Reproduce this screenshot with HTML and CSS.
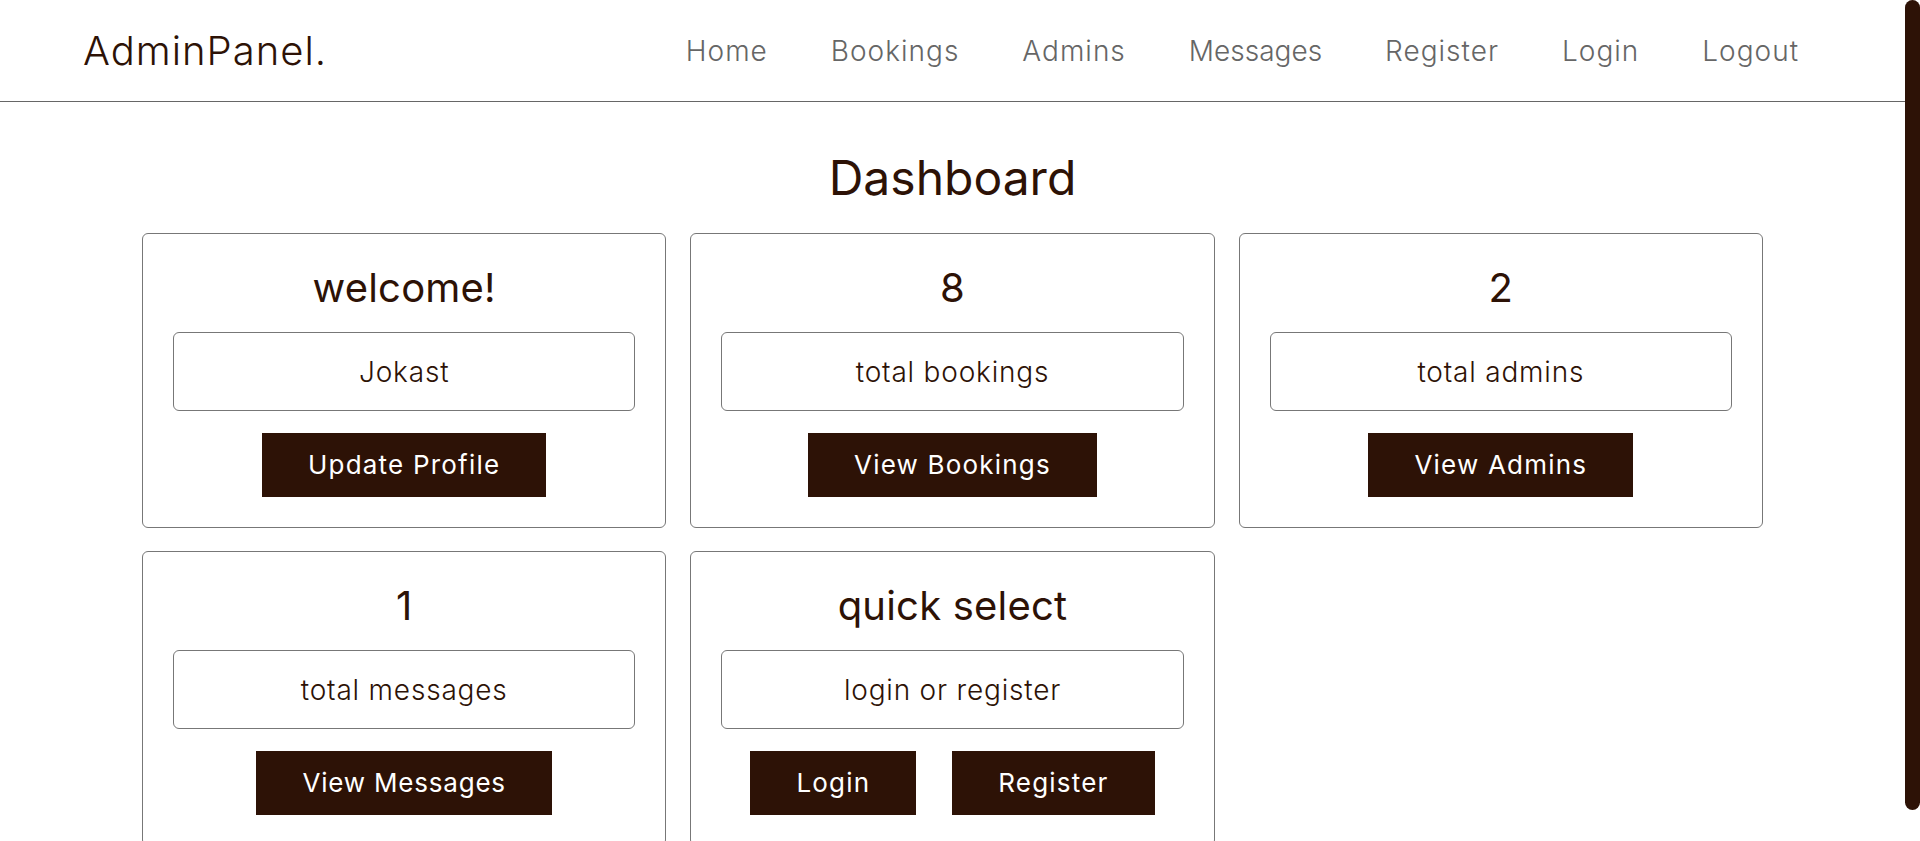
FILE: index.html
```html
<!DOCTYPE html>
<html lang="en">
<head>
<meta charset="utf-8">
<title>Admin Panel - Dashboard</title>
<link rel="stylesheet" href="styles.css">
</head>
<body>
<header class="header">
  <a href="#" class="logo">AdminPanel.</a>
  <nav class="navbar">
    <a href="#">Home</a>
    <a href="#">Bookings</a>
    <a href="#">Admins</a>
    <a href="#" class="tight">Messages</a>
    <a href="#">Register</a>
    <a href="#">Login</a>
    <a href="#">Logout</a>
  </nav>
</header>

<section class="dashboard">
  <h1 class="heading">Dashboard</h1>
  <div class="box-container">
    <div class="box">
      <h3>welcome!</h3>
      <p>Jokast</p>
      <div class="actions"><a href="#" class="btn">Update Profile</a></div>
    </div>
    <div class="box">
      <h3>8</h3>
      <p>total bookings</p>
      <div class="actions"><a href="#" class="btn">View Bookings</a></div>
    </div>
    <div class="box">
      <h3>2</h3>
      <p>total admins</p>
      <div class="actions"><a href="#" class="btn">View Admins</a></div>
    </div>
    <div class="box">
      <h3>1</h3>
      <p>total messages</p>
      <div class="actions"><a href="#" class="btn btn-tight">View Messages</a></div>
    </div>
    <div class="box">
      <h3>quick select</h3>
      <p>login or register</p>
      <div class="actions"><a href="#" class="btn">Login</a><a href="#" class="btn">Register</a></div>
    </div>
  </div>
</section>

<div class="scroll-thumb" aria-hidden="true"></div>
</body>
</html>
```

FILE: styles.css
```css
* {
  margin: 0;
  padding: 0;
  box-sizing: border-box;
  text-decoration: none;
}

html {
  font-family: "Inter", "Lato", sans-serif;
  color: #2d1206;
  background: #fff;
}

html::-webkit-scrollbar {
  width: 15px;
}

html::-webkit-scrollbar-track {
  background: #fff;
}

html::-webkit-scrollbar-thumb {
  background: #2d1206;
  border-radius: 8px;
}

body {
  background: #fff;
  padding-right: 15px;
}

.scroll-thumb {
  position: fixed;
  top: 0;
  right: 0;
  width: 15px;
  height: 810px;
  background: #2d1206;
  border-radius: 8px;
}

.header {
  display: flex;
  align-items: center;
  justify-content: space-between;
  height: 102px;
  padding: 0 106px 0 83px;
  border-bottom: 1px solid #666;
}

.logo {
  font-size: 40px;
  font-weight: 300;
  color: #2d1206;
  letter-spacing: 1px;
}

.navbar {
  display: flex;
  gap: 63px;
}

.navbar a {
  font-size: 28px;
  font-weight: 300;
  color: #666;
  letter-spacing: 1px;
}

.navbar a.tight {
  letter-spacing: 0;
}

.dashboard {
  padding: 47px 142px 26px;
}

.heading {
  text-align: center;
  font-size: 48px;
  line-height: 58px;
  font-weight: 400;
  color: #2d1206;
  margin-bottom: 26px;
}

.box-container {
  display: grid;
  grid-template-columns: repeat(3, 1fr);
  gap: 23px 24px;
}

.box {
  border: 1px solid #777;
  border-radius: 6px;
  padding: 30px;
  text-align: center;
}

.box h3 {
  font-size: 40px;
  line-height: 48px;
  font-weight: 400;
  color: #2d1206;
  letter-spacing: 0.2px;
}

.box p {
  margin-top: 20px;
  height: 79px;
  border: 1px solid #777;
  border-radius: 6px;
  display: flex;
  align-items: center;
  justify-content: center;
  font-size: 28px;
  font-weight: 300;
  color: #2d1206;
  letter-spacing: 0.8px;
}

.actions {
  margin-top: 22px;
  display: flex;
  justify-content: center;
  gap: 36px;
}

.btn {
  display: block;
  height: 64px;
  line-height: 64px;
  padding: 0 46px;
  background: #2d1206;
  color: #fff;
  font-size: 26px;
  font-weight: 400;
  letter-spacing: 1.2px;
}

.btn.btn-tight {
  letter-spacing: 0.8px;
}
```
